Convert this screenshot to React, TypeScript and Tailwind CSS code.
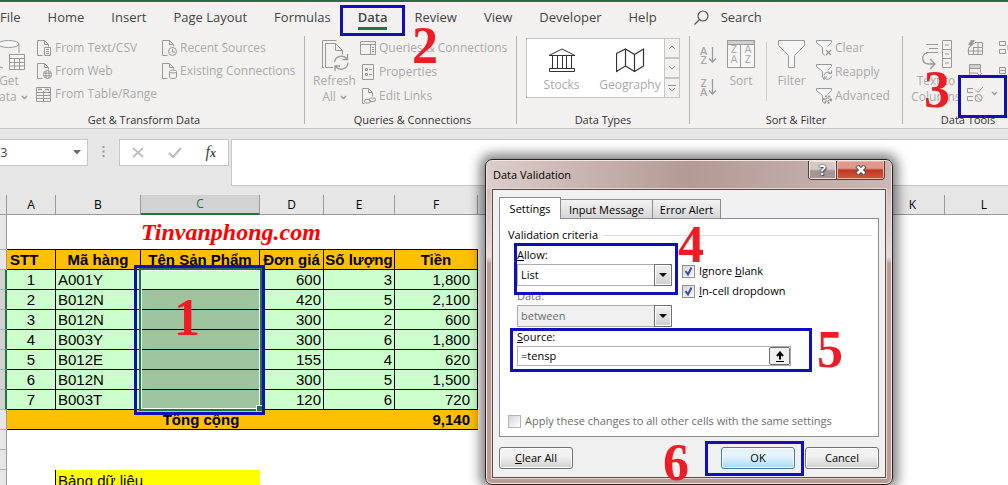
import React from 'react';

const TABS = ['File', 'Home', 'Insert', 'Page Layout', 'Formulas', 'Data', 'Review', 'View', 'Developer', 'Help'];

const ROWS = [
    { stt: 1, code: 'A001Y', price: '600', qty: 3, total: '1,800' },
    { stt: 2, code: 'B012N', price: '420', qty: 5, total: '2,100' },
    { stt: 3, code: 'B012N', price: '300', qty: 2, total: '600' },
    { stt: 4, code: 'B003Y', price: '300', qty: 6, total: '1,800' },
    { stt: 5, code: 'B012E', price: '155', qty: 4, total: '620' },
    { stt: 6, code: 'B012N', price: '300', qty: 5, total: '1,500' },
    { stt: 7, code: 'B003T', price: '120', qty: 6, total: '720' },
];

interface IconProps {
    w?: number;
    h?: number;
    tone?: string;
    className?: string;
    children: React.ReactNode;
}

function Icon({ w = 16, h = 16, tone = 'text-[#999]', className = '', children }: IconProps) {
    return (
        <svg
            width={w}
            height={h}
            viewBox={`0 0 ${w} ${h}`}
            fill="none"
            stroke="currentColor"
            className={`shrink-0 ${tone} ${className}`}
            aria-hidden="true"
        >
            {children}
        </svg>
    );
}

function Chevron({ className = 'ml-1 inline-block align-middle' }: { className?: string }) {
    return (
        <Icon w={7} h={5} className={className}>
            <path d="M1 1l2.5 2.5L6 1" strokeWidth="1.4" />
        </Icon>
    );
}

/* Sheet of paper with a folded corner, shared by the source icons */
function Page() {
    return <path d="M6.5 15.5h-5V.5h7l4 4v2M8.5 .5v4h4" />;
}

function Funnel() {
    return <path d="M9 15.5l-2.500-2V7.500L.5 2.500V.5h15v2l-4 4" fill="#f6f6f6" />;
}

const icons = {
    text: (
        <Icon>
            <Page />
            <path d="M8.500 7.500h6v8h-6zM10 9.500h3M10 11.500h3M10 13.500h3" />
        </Icon>
    ),
    web: (
        <Icon>
            <Page />
            <circle cx="11.500" cy="11.500" r="4" />
            <ellipse cx="11.500" cy="11.500" rx="1.700" ry="4" />
            <path d="M7.500 10.200h8M7.500 12.800h8" />
        </Icon>
    ),
    table: (
        <Icon>
            <path d="M.5 1.500h14v14H.5zM.5 6.500h14M.5 9.500h14M.5 12.500h14M7.500 5v10" />
            <path d="M2 3.500h4M9 3.500h4" strokeWidth="1.500" />
        </Icon>
    ),
    recent: (
        <Icon>
            <Page />
            <circle cx="11.500" cy="11.500" r="4" />
            <path d="M11.500 9v3H14" />
        </Icon>
    ),
    existing: (
        <Icon>
            <Page />
            <ellipse cx="12" cy="8.500" rx="3.500" ry="1.500" />
            <path d="M8.500 8.500V14c0 2 7 2 7 0V8.500" />
        </Icon>
    ),
    queries: (
        <Icon>
            <path d="M.5 1.500h15v13H.5zM.5 4.500h15M10.500 4.500v10M12 7.500h2M12 9.500h2M12 11.500h2" />
        </Icon>
    ),
    properties: (
        <Icon>
            <path d="M2.500 .5h11v15h-11zM5.500 4.500h2v2h-2zM5.500 9.500h2v2h-2zM9 5.500h3M9 10.500h3" />
        </Icon>
    ),
    links: (
        <Icon>
            <path d="M4.500 15.500h-2V.5h6l4 4v4M8.500 .5v4h4" />
            <rect x="4.500" y="11.500" width="6" height="3.500" rx="1.700" />
            <rect x="9" y="10" width="6.500" height="3.500" rx="1.700" />
        </Icon>
    ),
    clear: (
        <Icon>
            <Funnel />
            <path d="M10 10l5 5M15 10l-5 5" strokeWidth="1.300" />
        </Icon>
    ),
    reapply: (
        <Icon>
            <Funnel />
            <path d="M8 11.500a4 4 0 017-2M15.500 6.500v3h-3M15.500 12a4 4 0 01-7 2M8 16v-3h3" />
        </Icon>
    ),
    advanced: (
        <Icon>
            <Funnel />
            <circle cx="11.500" cy="11.500" r="3.500" strokeWidth="2" strokeDasharray="1.800 1.600" />
            <circle cx="11.500" cy="11.500" r="1.800" />
        </Icon>
    ),
};

function Command({ icon, label, tall }: { icon: React.ReactNode; label: string; tall?: boolean }) {
    return (
        <button className={`flex items-center gap-[3px] whitespace-nowrap ${tall ? 'h-6' : 'h-[23px]'}`}>
            {icon}
            <span>{label}</span>
        </button>
    );
}

function BigButton({ icon, className, children }: { icon: React.ReactNode; className: string; children: React.ReactNode }) {
    return (
        <button className={`flex shrink-0 flex-col items-center self-start whitespace-nowrap leading-4 ${className}`}>
            <span className="flex h-[37px] items-start pt-1">{icon}</span>
            {children}
        </button>
    );
}

function Group({ label, className, children }: { label: string; className: string; children: React.ReactNode }) {
    return (
        <section className={`flex shrink-0 flex-col ${className}`}>
            <div className="flex h-[76px] items-start">{children}</div>
            <h2 className="text-center text-[11px] leading-4 text-[#333]">{label}</h2>
        </section>
    );
}

function Divider() {
    return <div className="mb-1 w-px shrink-0 bg-[#b4b4b4]" />;
}

function SortIcon({ top, bottom, name }: { top: string; bottom: string; name: string }) {
    return (
        <button aria-label={name} className="flex h-8 items-center">
            <span className="flex flex-col text-[11px] font-semibold leading-[9px]">
                <span>{top}</span>
                <span>{bottom}</span>
            </span>
            <Icon w={9} h={18} className="ml-px">
                <path d="M4.500 1v15M1 12.500l3.500 3.500L8 12.500" strokeWidth="1.300" />
            </Icon>
        </button>
    );
}

function Ribbon() {
    return (
        <div className="flex h-[92px] text-[12px] text-[#a9a9a9]">
            <Group label="Get &amp; Transform Data" className="-ml-5 w-[324px] pl-1">
                <BigButton
                    className="w-[50px]"
                    icon={
                        <Icon w={32} h={30}>
                            <path d="M1 4v20c1 2 4 3 9 3.500M26 4v9" />
                            <ellipse cx="15.500" cy="4" rx="10.500" ry="3.500" fill="#f6f6f6" />
                            <path d="M16.500 14.500h15v15h-15zM16.500 18.500h15M16.500 22.500h15M16.500 26h15M21.500 18v11M26.500 18v11" fill="#f6f6f6" />
                        </Icon>
                    }
                >
                    <span>Get</span>
                    <span>Data<Chevron /></span>
                </BigButton>
                <div className="w-[127px] pl-0.5">
                    <Command icon={icons.text} label="From Text/CSV" />
                    <Command icon={icons.web} label="From Web" />
                    <Command icon={icons.table} label="From Table/Range" />
                </div>
                <div>
                    <Command icon={icons.recent} label="Recent Sources" />
                    <Command icon={icons.existing} label="Existing Connections" />
                </div>
            </Group>
            <Divider />
            <Group label="Queries &amp; Connections" className="w-[211px] pl-1">
                <BigButton
                    className="w-[51px]"
                    icon={
                        <Icon w={28} h={31}>
                            <path d="M3 27.500H1.500V.5h14M12 27.500H4.500v-24h10l7 7v4M14.500 3.500v7h7" />
                            <path d="M13.500 22a7 7 0 0112.500-3M26.500 14v5.500h-5M27 22.500a7 7 0 01-12.500 4M14 31v-5h5" strokeWidth="1.300" />
                        </Icon>
                    }
                >
                    <span>Refresh</span>
                    <span>All<Chevron /></span>
                </BigButton>
                <div>
                    <Command tall icon={icons.queries} label="Queries &amp; Connections" />
                    <Command tall icon={icons.properties} label="Properties" />
                    <Command tall icon={icons.links} label="Edit Links" />
                </div>
            </Group>
            <Divider />
            <Group label="Data Types" className="w-[172px] px-[9px]">
                <div className="mt-0.5 flex h-[60px] border border-[#c6c6c6] bg-white">
                    <button className="flex w-[69px] flex-col items-center pt-2 leading-4">
                        <Icon w={28} h={26} tone="text-[#333]">
                            <path d="M1 8.500L14 2l13 6.500zM1.500 21.500h25v3h-25zM4.500 8.500v13M9.500 9v12M14.500 9v12M18.500 9v12M23.500 8.500v13" />
                        </Icon>
                        <span className="mt-1">Stocks</span>
                    </button>
                    <button className="flex w-[68px] flex-col items-center pt-2 leading-4">
                        <Icon w={29} h={26} tone="text-[#333]">
                            <path d="M.5 6.500l9-4.500 9 5.500 9-5.500v17l-9 5.500-9-5.500-9 5.500zM9.500 2v17M18.500 7.500v17" strokeWidth="1.200" />
                        </Icon>
                        <span className="mt-1">Geography</span>
                    </button>
                    <div className="flex w-[15px] flex-col divide-y-2 divide-[#c6c6c6] border-l border-[#c6c6c6] bg-[#f3f1f0]">
                        {['M1 4l3-3 3 3', 'M1 1l3 3 3-3', 'M0 .5h8M1 3l3 3 3-3'].map((d, i) => (
                            <button key={d} aria-label={['Previous', 'Next', 'More'][i]} className="flex flex-1 items-center justify-center">
                                <Icon w={8} h={6}>
                                    <path d={d} />
                                </Icon>
                            </button>
                        ))}
                    </div>
                </div>
            </Group>
            <Divider />
            <Group label="Sort &amp; Filter" className="w-[212px] px-2.5">
                <div className="flex w-6 flex-col pt-[3px]">
                    <SortIcon name="Sort ascending" top="A" bottom="Z" />
                    <SortIcon name="Sort descending" top="Z" bottom="A" />
                </div>
                <BigButton
                    className="w-[34px]"
                    icon={
                        <span className="relative">
                            <Icon w={28} h={28}>
                                <path d="M.5 .5h27v27H.5z" fill="#f6f6f6" />
                                <path d="M.5 .5h27v4H.5z" fill="#cfcfcf" />
                                <path d="M13.500 4v23" />
                            </Icon>
                            <span className="absolute inset-x-0 bottom-1 grid grid-cols-2 text-center text-[11px] leading-[10px]">
                                <span>Z</span><span>A</span><span>A</span><span>Z</span>
                            </span>
                        </span>
                    }
                >
                    <span>Sort</span>
                </BigButton>
                <div className="ml-2 mt-1.5 h-[59px] w-px bg-[#cfcfcf]" />
                <BigButton
                    className="w-[49px]"
                    icon={
                        <Icon w={28} h={29}>
                            <path d="M.5 .5h26v5l-10 10v12h-6v-12l-10-10z" fill="#f6f6f6" />
                        </Icon>
                    }
                >
                    <span>Filter</span>
                </BigButton>
                <div>
                    <Command tall icon={icons.clear} label="Clear" />
                    <Command tall icon={icons.reapply} label="Reapply" />
                    <Command tall icon={icons.advanced} label="Advanced" />
                </div>
            </Group>
            <Divider />
            <Group label="Data Tools" className="w-[130px] px-2">
                <BigButton
                    className="w-[50px]"
                    icon={
                        <Icon w={31} h={30}>
                            <path d="M21.500 .5h9v27h-9zM21.500 9.500h9M21.500 18.500h9M24 5h4M24 14h4M24 23h4M5 4.500h12M8 8.500h9M5 12.500h12" />
                            <path d="M6 13c-6 1-6 11 2 11h5M9 19l5 5-5 5" strokeWidth="1.300" />
                        </Icon>
                    }
                >
                    <span>Text to</span>
                    <span>Columns</span>
                </BigButton>
                <div className="flex w-[38px] flex-col pl-[6px]">
                    <button aria-label="Flash Fill" className="flex h-[23px] items-center">
                        <Icon>
                            <path d="M1.500 7.500v7h14v-12H8M.5 11h15M6 7.500h9.500M6.500 8v7M11 2.500v12" />
                            <path d="M4 0h4L6 3h2L1 9l2-4H1z" fill="currentColor" stroke="none" />
                        </Icon>
                    </button>
                    <button aria-label="Remove Duplicates" className="flex h-[23px] items-center">
                        <Icon>
                            <path d="M2.500 1.500h11v4h-11z" fill="#cfcfcf" />
                            <path d="M2.500 5.500v9H9M2.500 10h8M13.500 5.500v4M10 10l5 5M15 10l-5 5" />
                        </Icon>
                    </button>
                    <button aria-label="Data Validation" className="flex h-[23px] items-center">
                        <Icon>
                            <path d="M6 2.500H.5v4H6M6 10.500H.5v4H6M8 3.500l3 3L16 1" />
                            <circle cx="11.500" cy="12" r="3.500" />
                            <path d="M9 9.500l5 5" />
                        </Icon>
                        <Chevron className="ml-2" />
                    </button>
                </div>
                <div className="flex flex-col">
                    <button aria-label="Consolidate" className="flex h-[23px] items-center">
                        <Icon><path d="M.5 1.500h6v4h-6zM.5 9.500h6v4h-6zM9 5h6v5H9z" /></Icon>
                    </button>
                    <button aria-label="Relationships" className="flex h-[23px] items-center">
                        <Icon><path d="M.5 4.500h6v6h-6zM.5 7.500h6M9.500 1.500h6v5h-6z" /></Icon>
                    </button>
                </div>
            </Group>
        </div>
    );
}

function FormulaBar() {
    return (
        <div className="flex h-[67px] items-start border-t border-[#c6c6c6] bg-[#e6e6e6] pt-2.5">
            <div className="-ml-3 flex h-[27px] w-[100px] shrink-0 items-center justify-between border border-[#c6c6c6] bg-white pr-1.5">
                <input aria-label="Name Box" defaultValue="C3" className="w-12 bg-transparent pl-1 text-[12px] text-[#444] outline-none" />
                <Icon w={8} h={5} tone="text-[#6a6a6a]">
                    <path d="M0 0h8L4 4.500z" fill="currentColor" stroke="none" />
                </Icon>
            </div>
            <Icon w={3} h={12} className="mx-[14px] mt-[7px]">
                <path d="M.5 1h2M.5 5.500h2M.5 10h2" strokeWidth="2" />
            </Icon>
            <div className="flex h-[27px] w-[110px] shrink-0 items-center justify-around border border-[#c6c6c6] bg-white">
                <button aria-label="Cancel entry">
                    <Icon w={12} h={11} tone="text-[#bdbdbd]"><path d="M1 1l10 9M11 1L1 10" strokeWidth="1.800" /></Icon>
                </button>
                <button aria-label="Enter">
                    <Icon w={14} h={11} tone="text-[#bdbdbd]"><path d="M1 6l4 4 8-9" strokeWidth="2.200" /></Icon>
                </button>
                <button aria-label="Insert Function" className="font-['Liberation_Serif',serif] text-[16px] italic leading-4 text-[#444]">
                    f<span className="text-[12px] font-bold">x</span>
                </button>
            </div>
            <input aria-label="Formula Bar" className="ml-0.5 h-[47px] flex-1 border border-r-0 border-[#c6c6c6] bg-white px-2 outline-none" />
        </div>
    );
}

const cell = 'border-b border-r border-black bg-[#ccffcc] p-0';
const head = 'border-b border-r border-black bg-[#ffc000] p-0 font-bold';

function RowHeader({ active }: { active?: boolean }) {
    return (
        <th
            className={`border-b border-b-[#b0b0b0] p-0 ${active ? 'border-r-2 border-r-[#217346] bg-[#d2d2d2]' : 'border-r border-r-[#9a9a9a] bg-[#e6e6e6]'}`}
        />
    );
}

function Sheet() {
    return (
        <table className="w-full min-w-[1024px] table-fixed border-separate border-spacing-0 whitespace-nowrap font-['Liberation_Sans',Arial,sans-serif] text-[15px] leading-[19px] text-black">
            <colgroup>
                <col className="w-[7px]" />
                <col className="w-[49px]" />
                <col className="w-[85px]" />
                <col className="w-[119px]" />
                <col className="w-[64px]" />
                <col className="w-[71px]" />
                <col className="w-[83px]" />
                <col className="w-[101px]" />
                <col className="w-[101px]" />
                <col className="w-[101px]" />
                <col className="w-[100px]" />
                <col className="w-[64px]" />
                <col />
            </colgroup>
            <thead>
                <tr className="h-5 font-['Open_Sans',sans-serif] text-[12px]">
                    <th className="border-b border-r border-[#9a9a9a] bg-[#e6e6e6] p-0" />
                    {'ABCDEFGHIJKL'.split('').map((c) => (
                        <th
                            key={c}
                            className={`border-r border-r-[#9a9a9a] p-0 font-normal ${c === 'C'
                                ? 'border-b-2 border-b-[#217346] bg-[#d2d2d2] leading-[18px] text-[#217346]'
                                : 'border-b border-b-[#9a9a9a] bg-[#e6e6e6]'}`}
                        >
                            {/* G to J lie behind the dialog */}
                            {'GHIJ'.includes(c) ? null : c}
                        </th>
                    ))}
                </tr>
            </thead>
            <tbody>
                <tr className="h-[35px]">
                    <RowHeader />
                    <td colSpan={2} className="border-b border-black p-0" />
                    <td colSpan={4} className="border-b border-black p-0 font-['Liberation_Serif',serif] text-[24px] font-bold italic leading-[34px] text-[#ff0000]">
                        Tinvanphong.com
                    </td>
                </tr>
                <tr className="h-5">
                    <RowHeader />
                    <th className={`${head} pl-[3px] text-left`}>STT</th>
                    <th className={head}>Mã hàng</th>
                    <th className={head}>Tên Sản Phẩm</th>
                    <th className={head}>Đơn giá</th>
                    <th className={head}>Số lượng</th>
                    <th className={head}>Tiền</th>
                </tr>
                {ROWS.map((r, i) => (
                    <tr key={r.stt} className="h-5">
                        <RowHeader active />
                        <td className={`${cell} text-center`}>{r.stt}</td>
                        <td className={`${cell} pl-0.5`}>{r.code}</td>
                        <td className={`relative border-b border-r border-black p-0 ${i === 0 ? 'bg-[#ccffcc]' : 'bg-[#9dc59d]'}`}>
                            {i === 0 && (
                                <div className="absolute -left-0.5 -top-0.5 z-10 h-[143px] w-[123px] border-2 border-[#217346]">
                                    <div className="h-full border border-white" />
                                    <div className="absolute -bottom-0.5 -right-0.5 size-[6px] border-l border-t border-white bg-[#217346]" />
                                </div>
                            )}
                        </td>
                        <td className={`${cell} pr-0.5 text-right`}>{r.price}</td>
                        <td className={`${cell} pr-0.5 text-right`}>{r.qty}</td>
                        <td className={`${cell} pr-[7px] text-right`}>{r.total}</td>
                    </tr>
                ))}
                <tr className="h-5">
                    <RowHeader />
                    <th colSpan={5} className="border-b border-black bg-[#ffc000] p-0 font-bold">Tổng cộng</th>
                    <td className="border-b border-black bg-[#ffc000] p-0 pr-2 text-right font-bold">9,140</td>
                </tr>
                <tr className="h-5"><RowHeader /></tr>
                <tr className="h-5"><RowHeader /></tr>
                <tr className="h-5">
                    <RowHeader />
                    <td className="border-r border-black p-0" />
                    <td colSpan={2} className="bg-[#ffff00] p-0 pl-0.5">Bảng dữ liệu</td>
                </tr>
            </tbody>
        </table>
    );
}

function DropDown({ id, value, disabled }: { id: string; value: string; disabled?: boolean }) {
    return (
        <div className="relative">
            <select
                id={id}
                disabled={disabled}
                className={`block h-[22px] w-full appearance-none border border-[#abadb3] pl-[3px] leading-5 opacity-100 ${disabled ? 'bg-[#f0f0f0] text-[#6d6d6d]' : 'bg-white text-black'}`}
            >
                <option>{value}</option>
            </select>
            <span className="pointer-events-none absolute inset-y-0 right-0 flex w-[18px] items-center justify-center border border-[#707070] bg-linear-to-b from-[#f2f2f2] to-[#cfcfcf] shadow-[inset_0_0_0_1px_#fcfcfc]">
                <Icon w={8} h={4} tone="text-black">
                    <path d="M0 0h8L4 4z" fill="currentColor" stroke="none" />
                </Icon>
            </span>
        </div>
    );
}

interface CheckProps {
    checked?: boolean;
    disabled?: boolean;
    children: React.ReactNode;
}

function Check({ checked, disabled, children }: CheckProps) {
    return (
        <label className={`flex h-5 items-center gap-1 whitespace-nowrap ${disabled ? 'text-[#6d6d6d]' : ''}`}>
            <span className="relative flex">
                <input
                    type="checkbox"
                    defaultChecked={checked}
                    disabled={disabled}
                    className={`peer size-[13px] appearance-none border bg-linear-to-br from-[#d0d5dc] to-white ${disabled ? 'border-[#b4b4b4]' : 'border-[#8e8f8f]'}`}
                />
                <Icon w={13} h={13} tone="text-[#3c4f9a]" className="pointer-events-none absolute inset-0 hidden peer-checked:block">
                    <path d="M3.500 6l2.500 3.500L9.500 2.500" strokeWidth="2" />
                </Icon>
            </span>
            <span>{children}</span>
        </label>
    );
}

const pushButton = 'h-[22px] w-[74px] rounded-[3px] border text-center leading-5 shadow-[inset_0_0_0_1px_#fcfcfc]';
const grayButton = 'border-[#707070] bg-linear-to-b from-[#f2f2f2] from-40% to-[#cfcfcf]';
const tab = 'h-[19px] border border-b-0 border-[#898c95] bg-linear-to-b from-[#f3f3f3] to-[#d6d6d6] text-center leading-[19px]';

function Dialog() {
    return (
        <div
            role="dialog"
            aria-label="Data Validation"
            className="absolute left-[485px] top-[159px] z-20 w-[408px] rounded-[7px] border border-[#222] bg-linear-to-b from-[#c9b2ad] via-[#e6dad8] via-30% to-[#b89c96] to-32% px-1.5 pb-1.5 text-[11px] text-black shadow-[inset_0_0_0_1px_#f3e6e3,0_0_12px_5px_rgba(0,0,0,0.5)]"
        >
            <div className="-mx-[5px] mt-px flex h-7 items-start justify-between rounded-t-[5px] bg-linear-to-r from-[#dccdca] via-[#b39a94] via-50% to-[#cbb8b4] pl-1.5">
                <h1 className="leading-7">Data Validation</h1>
                <div className="mr-1.5 flex h-[19px] overflow-hidden rounded-b-[4px] border border-t-0 border-[#50403e]">
                    <button aria-label="Help" className="flex w-7 items-center justify-center border-r border-[#50403e] bg-linear-to-b from-[#d6c8c5] from-45% to-[#a69593] to-55% shadow-[inset_0_0_0_1px_#efe2df]">
                        <span className="text-[14px] font-bold leading-4 text-white [text-shadow:0_0_1px_#334,0_0_2px_#334,1px_1px_0_#556]">?</span>
                    </button>
                    <button aria-label="Close" className="flex w-[47px] items-center justify-center bg-linear-to-b from-[#dd9a8c] from-40% via-[#c0371d] via-50% to-[#d4563c] shadow-[inset_0_0_0_1px_#eeb5a8]">
                        <Icon w={12} h={10}>
                            <path d="M2 1l8 8M10 1L2 9" stroke="#4a4a5e" strokeWidth="4.500" />
                            <path d="M2.500 1.500l7 7M9.500 1.500l-7 7" stroke="#fff" strokeWidth="2.500" />
                        </Icon>
                    </button>
                </div>
            </div>
            <div className="border border-[#5a4a48] bg-[#f0f0f0] px-1.5 pb-2 pt-[7px] shadow-[0_0_0_1px_#e6d8d5]">
                <div role="tablist" className="flex items-end">
                    <button role="tab" className="relative z-10 -mb-px h-[22px] w-[62px] border border-b-0 border-[#898c95] bg-white leading-[22px]">Settings</button>
                    <button role="tab" className={`${tab} w-[92px] border-l-0`}>Input Message</button>
                    <button role="tab" className={`${tab} w-[68px] border-l-0`}>Error Alert</button>
                </div>
                <div className="flex h-[219px] flex-col border border-[#898c95] bg-white pl-2 pr-1.5 pt-[7px]">
                    <div className="flex h-[19px] items-center gap-[5px]">
                        <span>Validation criteria</span>
                        <span className="h-px flex-1 bg-[#d5dfe5]" />
                    </div>
                    <div className="flex gap-2.5 pl-[9px]">
                        <div className="w-[155px]">
                            <label htmlFor="allow" className="block h-[19px] leading-[19px]"><u>A</u>llow:</label>
                            <DropDown id="allow" value="List" />
                            <label htmlFor="data" className="block h-[19px] leading-[19px] text-[#6d6d6d]">Data:</label>
                            <DropDown id="data" value="between" disabled />
                        </div>
                        <div className="pt-4">
                            <Check checked>Ignore <u>b</u>lank</Check>
                            <Check checked><u>I</u>n-cell dropdown</Check>
                        </div>
                    </div>
                    <div className="pl-[9px]">
                        <label htmlFor="source" className="block h-[19px] leading-[19px]"><u>S</u>ource:</label>
                        <div className="flex h-5 w-[274px] border border-[#abadb3]">
                            <input id="source" defaultValue="=tensp" className="min-w-0 flex-1 pl-[3px] outline-none" />
                            <button aria-label="Collapse dialog" className="flex w-[21px] items-center justify-center rounded-[2px] border border-[#707070] bg-[#f0f0f0]">
                                <Icon w={10} h={11} tone="text-black">
                                    <path d="M5 8.500V2M2 5l3-3.500L8 5" strokeWidth="2" />
                                    <path d="M1 10.500h8" />
                                </Icon>
                            </button>
                        </div>
                    </div>
                    <div className="mb-[5px] mt-auto">
                        <Check disabled>Apply these changes to all other cells with the same settings</Check>
                    </div>
                </div>
                <div className="mt-2.5 flex gap-2.5">
                    <button className={`${pushButton} ${grayButton} mr-auto`}><u>C</u>lear All</button>
                    <button className={`${pushButton} border-[#3c7fb1] bg-linear-to-b from-[#e5f4fc] from-40% to-[#a5d9f5]`}>OK</button>
                    <button className={`${pushButton} ${grayButton}`}>Cancel</button>
                </div>
            </div>
        </div>
    );
}

/* Tutorial call-outs: a blue frame and its step number, placed freely over the window */
const STEPS = [
    { n: 1, frame: 'left-[134px] top-[265px] h-[150px] w-[131px]', digit: 'left-[174px] top-[292px]' },
    { n: 2, frame: 'left-[340px] top-[5px] h-[31px] w-[65px]', digit: 'left-[412px] top-[20px]' },
    { n: 3, frame: 'left-[958px] top-[75px] h-[43px] w-[49px]', digit: 'left-[924px] top-[64px]' },
    { n: 4, frame: 'left-[514px] top-[243px] h-[52px] w-[164px]', digit: 'left-[678px] top-[219px]' },
    { n: 5, frame: 'left-[510px] top-[328px] h-[44px] w-[302px]', digit: 'left-[817px] top-[324px]' },
    { n: 6, frame: 'left-[705px] top-[441px] h-[35px] w-[99px]', digit: 'left-[663px] top-[437px]' },
];

function Steps() {
    return (
        <div className="pointer-events-none absolute inset-0 z-30">
            {STEPS.map((s) => (
                <React.Fragment key={s.n}>
                    <div className={`absolute border-3 border-[#0f0fbe] ${s.frame}`} />
                    <span className={`absolute font-['Liberation_Serif',serif] text-[52px] font-bold leading-none text-[#ee1c24] ${s.digit}`}>
                        {s.n}
                    </span>
                </React.Fragment>
            ))}
        </div>
    );
}

export default function App() {
    return (
        <div className="relative h-screen overflow-hidden bg-white font-['Open_Sans',sans-serif]">
            <header className="border-t-2 border-[#217346] bg-[#f3f1f0]">
                <nav className="flex h-[34px] items-start gap-[27px] pt-[3px] text-[13px] leading-6 text-[#444]">
                    {TABS.map((t) => (
                        <a key={t} href="#" className={`whitespace-nowrap ${t === 'Data' ? 'h-[25px] border-b-3 border-[#217346] font-semibold' : ''}`}>
                            {t}
                        </a>
                    ))}
                    <button className="ml-2.5 flex items-center gap-3">
                        <Icon w={15} h={15} tone="text-[#555]">
                            <circle cx="9" cy="6" r="5" strokeWidth="1.200" />
                            <path d="M5.500 9.500L.5 14.500" strokeWidth="1.300" />
                        </Icon>
                        Search
                    </button>
                </nav>
                <Ribbon />
            </header>
            <FormulaBar />
            <Sheet />
            <Dialog />
            <Steps />
        </div>
    );
}
